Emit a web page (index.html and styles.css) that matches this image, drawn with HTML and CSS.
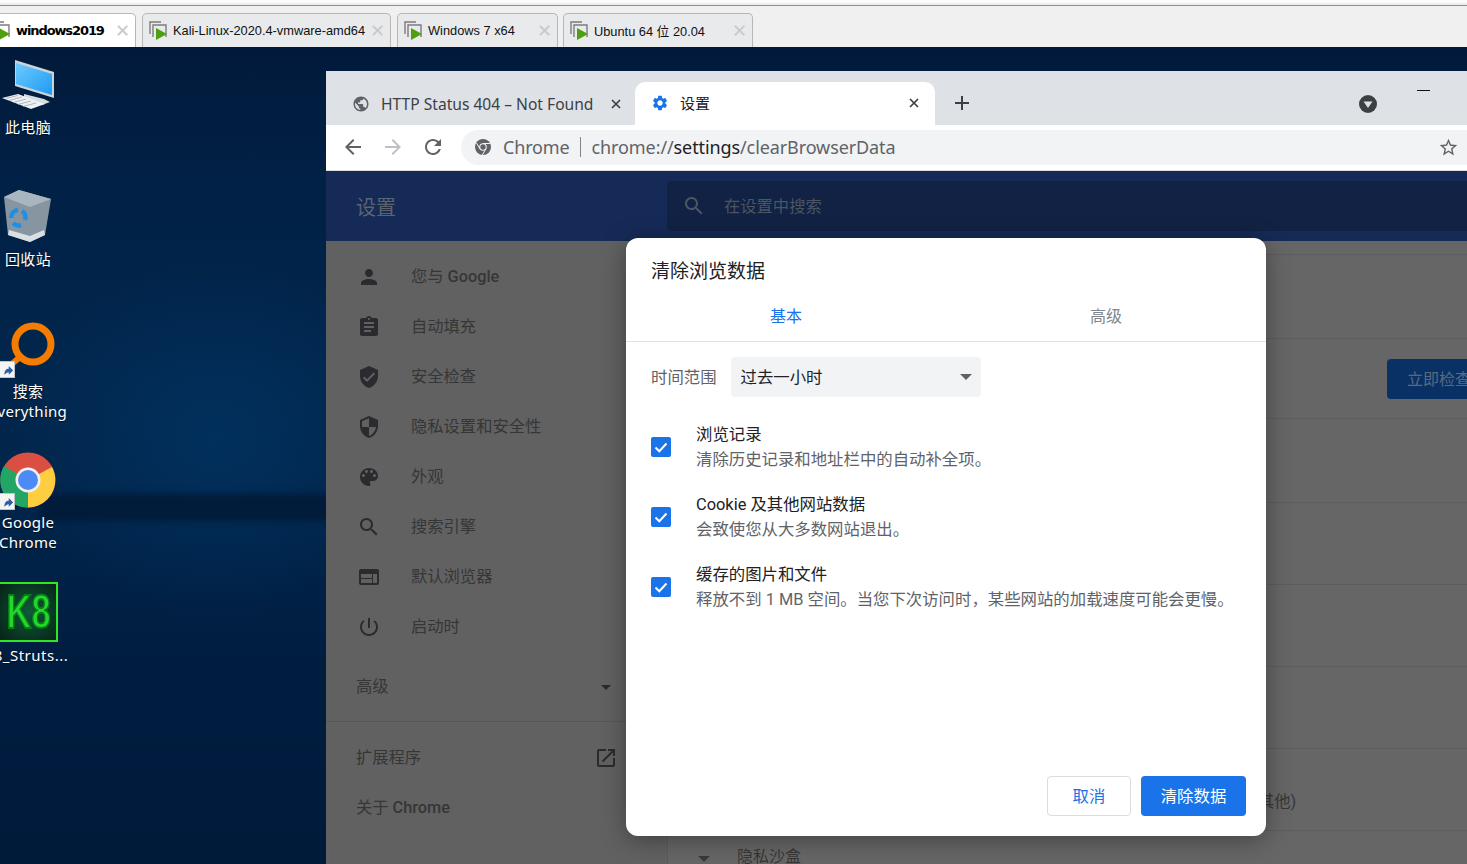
FILE: index.html
```html
<!DOCTYPE html>
<html lang="zh-CN">
<head>
<meta charset="utf-8">
<title>VMware - 清除浏览数据</title>
<link rel="stylesheet" href="styles.css">
</head>
<body>
<div class="vm-bar">
  <div class="vm-tab vm-tab-active">
    <svg class="vm-icon" viewBox="0 0 20 20"><path class="vm-frame" d="M1 13V1h11M4 16V4h13v12"/><path class="vm-play" d="M7 7l11 6-11 6z"/></svg>
    <span class="vm-label vm-label-bold">windows2019</span><span class="vm-x">✕</span>
  </div>
  <div class="vm-tab vm-tab-kali">
    <svg class="vm-icon" viewBox="0 0 20 20"><path class="vm-frame" d="M1 13V1h11M4 16V4h13v12"/><path class="vm-play" d="M7 7l11 6-11 6z"/></svg>
    <span class="vm-label">Kali-Linux-2020.4-vmware-amd64</span><span class="vm-x">✕</span>
  </div>
  <div class="vm-tab vm-tab-win7">
    <svg class="vm-icon" viewBox="0 0 20 20"><path class="vm-frame" d="M1 13V1h11M4 16V4h13v12"/><path class="vm-play" d="M7 7l11 6-11 6z"/></svg>
    <span class="vm-label">Windows 7 x64</span><span class="vm-x">✕</span>
  </div>
  <div class="vm-tab vm-tab-ubuntu">
    <svg class="vm-icon" viewBox="0 0 20 20"><path class="vm-frame" d="M1 13V1h11M4 16V4h13v12"/><path class="vm-play" d="M7 7l11 6-11 6z"/></svg>
    <span class="vm-label">Ubuntu 64 位 20.04</span><span class="vm-x">✕</span>
  </div>
</div>

<main class="desktop">
  <div class="band"></div>

  <div class="desk-icon di-pc">
    <svg class="desk-svg" viewBox="0 0 60 60">
      <defs><linearGradient id="scr" x1="0" y1="0" x2="1" y2="1"><stop offset="0" stop-color="#6ccaff"/><stop offset="1" stop-color="#1f9bf2"/></linearGradient></defs>
      <path d="M15 0l39 12v26L15 26z" fill="#c9d3da"/>
      <path d="M16 3l36 11v21L16 24z" fill="url(#scr)"/>
      <path d="M24 34l20 5 6 3-8 3-18-3z" fill="#d5dde2"/>
      <path d="M2 38l16-4 27 10-14 5z" fill="#eef2f4"/>
      <path d="M6 38.500l12-3M9 40.500l13-3.500M13 42.500l13-3.500M18 44.500l13-3.500M23 46.500l13-3.500" stroke="#9aa6ad" stroke-width=".8"/>
    </svg>
    <span class="desk-name">此电脑</span>
  </div>

  <div class="desk-icon di-bin">
    <svg class="desk-svg" viewBox="0 0 60 60">
      <path d="M4 8L19 1l32 9-6 36-15 7-22-7z" fill="#8795a1"/>
      <path d="M4 8L19 1l32 9-21 8z" fill="#a9b6bf"/>
      <path d="M8 46l22 7 15-7-1-5-14 6-21-6z" fill="#d9dfe3"/>
      <g fill="none" stroke="#1e8fe6" stroke-width="4.500"><path d="M11 29a8 8 0 0 1 7-8"/><path d="M22 22a8 8 0 0 1 3 9"/><path d="M21 36a8 8 0 0 1-8-2"/></g>
    </svg>
    <span class="desk-name">回收站</span>
  </div>

  <div class="desk-icon di-every">
    <svg class="desk-svg" viewBox="0 0 60 60">
      <circle cx="33" cy="23" r="18" fill="none" stroke="#f57c00" stroke-width="7"/>
      <path d="M20 36L6 48" stroke="#f57c00" stroke-width="6"/>
    </svg>
    <span class="badge badge-every"><svg viewBox="0 0 16 16"><path d="M5 14c0-5 2-7 5-7V4l5 5-5 5v-3c-2 0-3 1-5 3z" fill="#2b5ea8"/></svg></span>
    <span class="desk-name">搜索<br>Everything</span>
  </div>

  <div class="desk-icon di-chrome">
    <svg class="desk-svg" viewBox="0 0 60 60">
      <circle cx="28" cy="28" r="27.500" fill="#db4f43"/>
      <path d="M28 28L4 14A27.500 27.500 0 0 0 28 55.500z" fill="#22a565"/>
      <path d="M28 28l24-13A27.500 27.500 0 0 1 28 55.500z" fill="#ffcd40"/>
      <circle cx="28" cy="28" r="12.500" fill="#f1f1f1"/>
      <circle cx="28" cy="28" r="10" fill="#4c8bf5"/>
    </svg>
    <span class="badge badge-chrome"><svg viewBox="0 0 16 16"><path d="M5 14c0-5 2-7 5-7V4l5 5-5 5v-3c-2 0-3 1-5 3z" fill="#2b5ea8"/></svg></span>
    <span class="desk-name">Google<br>Chrome</span>
  </div>

  <div class="desk-icon di-k8">
    <div class="k8-box"><span class="k8-text">K8</span></div>
    <span class="desk-name">8_Struts...</span>
  </div>

  <section class="browser">
    <div class="tabstrip">
      <div class="ctab ctab-off">
        <svg class="ctab-ico" viewBox="0 0 24 24"><path fill="#5f6368" d="M12 2C6.480 2 2 6.480 2 12s4.480 10 10 10 10-4.480 10-10S17.520 2 12 2zm-1 17.930c-3.950-.490-7-3.850-7-7.930 0-.620.080-1.210.210-1.790L9 15v1c0 1.100.900 2 2 2v1.930zm6.900-2.540c-.260-.810-1-1.390-1.900-1.390h-1v-3c0-.550-.450-1-1-1H8v-2h2c.550 0 1-.450 1-1V7h2c1.100 0 2-.900 2-2v-.410c2.930 1.190 5 4.060 5 7.410 0 2.080-.800 3.970-2.100 5.390z"/></svg>
        <span class="ctab-title">HTTP Status 404 – Not Found</span>
        <svg class="ctab-close" viewBox="0 0 12 12"><path d="M2 2l8 8M10 2l-8 8"/></svg>
      </div>
      <div class="ctab ctab-on">
        <svg class="ctab-ico" viewBox="0 0 24 24"><path fill="#1a73e8" d="M19.140 12.940c.040-.300.060-.610.060-.940 0-.320-.020-.640-.070-.940l2.030-1.580c.180-.140.230-.410.120-.610l-1.920-3.320c-.120-.220-.370-.290-.590-.220l-2.390.960c-.500-.380-1.030-.700-1.620-.940l-.360-2.540c-.040-.240-.240-.410-.480-.410h-3.840c-.240 0-.430.170-.470.410l-.360 2.540c-.590.240-1.130.570-1.620.940l-2.390-.960c-.220-.080-.470 0-.590.220L2.740 8.870c-.120.210-.080.470.120.610l2.030 1.580c-.050.300-.090.630-.090.940s.020.640.070.940l-2.030 1.580c-.180.140-.230.410-.12.610l1.920 3.320c.120.220.370.290.590.220l2.390-.960c.500.380 1.030.700 1.620.940l.360 2.540c.050.240.240.410.480.410h3.840c.240 0 .440-.170.470-.410l.360-2.540c.590-.240 1.130-.560 1.620-.940l2.390.960c.220.080.470 0 .590-.220l1.920-3.320c.120-.220.070-.470-.120-.610l-2.010-1.580zM12 15.600c-1.980 0-3.600-1.620-3.600-3.600s1.620-3.600 3.600-3.600 3.600 1.620 3.600 3.600-1.620 3.600-3.600 3.600z"/></svg>
        <span class="ctab-title ctab-title-on">设置</span>
        <svg class="ctab-close" viewBox="0 0 12 12"><path d="M2 2l8 8M10 2l-8 8"/></svg>
      </div>
      <svg class="newtab" viewBox="0 0 16 16"><path d="M8 1v14M1 8h14"/></svg>
      <svg class="profile" viewBox="0 0 18 18"><circle cx="9" cy="9" r="9" fill="#3c4043"/><path d="M4.500 6.500h9L9 13z" fill="#dee1e6"/></svg>
      <span class="minimize"></span>
    </div>

    <div class="toolbar">
      <svg class="tool-ico tool-back" viewBox="0 0 24 24"><path d="M20 11H7.830l5.590-5.590L12 4l-8 8 8 8 1.410-1.410L7.830 13H20v-2z"/></svg>
      <svg class="tool-ico tool-fwd" viewBox="0 0 24 24"><path d="M12 4l-1.410 1.410L16.170 11H4v2h12.170l-5.580 5.590L12 20l8-8z"/></svg>
      <svg class="tool-ico tool-reload" viewBox="0 0 24 24"><path d="M17.650 6.350C16.200 4.900 14.210 4 12 4c-4.420 0-7.990 3.580-7.990 8s3.570 8 7.990 8c3.730 0 6.840-2.550 7.730-6h-2.080c-.820 2.330-3.040 4-5.650 4-3.310 0-6-2.690-6-6s2.690-6 6-6c1.660 0 3.140.690 4.220 1.780L13 11h7V4l-2.350 2.350z"/></svg>
      <div class="omnibox">
        <svg class="omni-chrome" viewBox="0 0 16 16"><circle cx="8" cy="8" r="8" fill="#5f6368"/><circle cx="8" cy="8" r="3.800" fill="#f1f3f4"/><circle cx="8" cy="8" r="2.700" fill="#5f6368"/><path d="M8 4.500h7M5 10l-3.500-6M10.800 10l-3.500 6" stroke="#f1f3f4" stroke-width="1"/></svg>
        <span class="omni-site">Chrome</span>
        <span class="omni-sep"></span>
        <span class="omni-url">chrome://<b class="omni-host">settings</b>/clearBrowserData</span>
        <svg class="omni-star" viewBox="0 0 24 24"><path d="M22 9.240l-7.190-.620L12 2 9.190 8.630 2 9.240l5.460 4.730L5.820 21 12 17.270 18.180 21l-1.630-7.030L22 9.240zM12 15.400l-3.760 2.270 1-4.280-3.320-2.880 4.380-.380L12 6.100l1.710 4.040 4.380.380-3.320 2.880 1 4.280L12 15.400z"/></svg>
      </div>
    </div>

    <header class="set-head">
      <span class="set-title">设置</span>
      <div class="set-search">
        <svg class="set-search-ico" viewBox="0 0 24 24"><path d="M15.500 14h-.790l-.280-.270C15.410 12.590 16 11.110 16 9.500 16 5.910 13.090 3 9.500 3S3 5.910 3 9.500 5.910 16 9.500 16c1.610 0 3.090-.590 4.230-1.570l.270.280v.790l5 4.990L20.490 19l-4.990-5zm-6 0C7.010 14 5 11.990 5 9.500S7.010 5 9.500 5 14 7.010 14 9.500 11.990 14 9.500 14z"/></svg>
        <span class="set-search-text">在设置中搜索</span>
      </div>
    </header>

    <div class="set-body">
      <nav class="side">
        <div class="side-item"><svg class="side-ico" viewBox="0 0 24 24"><path d="M12 12c2.210 0 4-1.790 4-4s-1.790-4-4-4-4 1.790-4 4 1.790 4 4 4zm0 2c-2.670 0-8 1.340-8 4v2h16v-2c0-2.660-5.330-4-8-4z"/></svg><span>您与 <b class="side-latin">Google</b></span></div>
        <div class="side-item"><svg class="side-ico" viewBox="0 0 24 24"><path d="M19 3h-4.180C14.400 1.840 13.300 1 12 1c-1.300 0-2.400.840-2.820 2H5c-1.100 0-2 .900-2 2v14c0 1.100.900 2 2 2h14c1.100 0 2-.900 2-2V5c0-1.100-.900-2-2-2zm-7 0c.550 0 1 .450 1 1s-.450 1-1 1-1-.450-1-1 .450-1 1-1zm2 14H7v-2h7v2zm3-4H7v-2h10v2zm0-4H7V7h10v2z"/></svg><span>自动填充</span></div>
        <div class="side-item"><svg class="side-ico" viewBox="0 0 24 24"><path d="M12 1L3 5v6c0 5.550 3.840 10.740 9 12 5.160-1.260 9-6.450 9-12V5l-9-4zm-2 16l-4-4 1.410-1.410L10 14.170l6.590-6.590L18 9l-8 8z"/></svg><span>安全检查</span></div>
        <div class="side-item"><svg class="side-ico" viewBox="0 0 24 24"><path d="M12 1L3 5v6c0 5.550 3.840 10.740 9 12 5.160-1.260 9-6.450 9-12V5l-9-4zm0 10.990h7c-.530 4.120-3.280 7.790-7 8.940V12H5V6.300l7-3.110v8.800z"/></svg><span>隐私设置和安全性</span></div>
        <div class="side-item"><svg class="side-ico" viewBox="0 0 24 24"><path d="M12 3c-4.970 0-9 4.030-9 9s4.030 9 9 9c.830 0 1.500-.670 1.500-1.500 0-.390-.150-.740-.390-1.010-.230-.260-.380-.610-.380-.990 0-.830.670-1.500 1.500-1.500H16c2.760 0 5-2.240 5-5 0-4.420-4.030-8-9-8zm-5.500 9c-.830 0-1.500-.670-1.500-1.500S5.670 9 6.500 9 8 9.670 8 10.500 7.330 12 6.500 12zm3-4C8.670 8 8 7.330 8 6.500S8.670 5 9.500 5s1.500.670 1.500 1.500S10.330 8 9.500 8zm5 0c-.830 0-1.500-.670-1.500-1.500S13.670 5 14.500 5s1.500.670 1.500 1.500S15.330 8 14.500 8zm3 4c-.830 0-1.500-.670-1.500-1.500S16.670 9 17.500 9s1.500.670 1.500 1.500-.670 1.500-1.500 1.500z"/></svg><span>外观</span></div>
        <div class="side-item"><svg class="side-ico" viewBox="0 0 24 24"><path d="M15.500 14h-.790l-.280-.270C15.410 12.590 16 11.110 16 9.500 16 5.910 13.090 3 9.500 3S3 5.910 3 9.500 5.910 16 9.500 16c1.610 0 3.090-.590 4.230-1.570l.270.280v.790l5 4.990L20.490 19l-4.990-5zm-6 0C7.010 14 5 11.990 5 9.500S7.010 5 9.500 5 14 7.010 14 9.500 11.990 14 9.500 14z"/></svg><span>搜索引擎</span></div>
        <div class="side-item"><svg class="side-ico" viewBox="0 0 24 24"><path d="M20 4H4c-1.100 0-1.990.900-1.990 2L2 18c0 1.100.900 2 2 2h16c1.100 0 2-.900 2-2V6c0-1.100-.900-2-2-2zm-5 14H4v-4h11v4zm0-5H4V9h11v4zm5 5h-4V9h4v9z"/></svg><span>默认浏览器</span></div>
        <div class="side-item"><svg class="side-ico" viewBox="0 0 24 24"><path d="M13 3h-2v10h2V3zm4.830 2.170l-1.420 1.420C17.990 7.860 19 9.810 19 12c0 3.870-3.130 7-7 7s-7-3.130-7-7c0-2.190 1.010-4.140 2.580-5.420L6.170 5.170C4.230 6.820 3 9.260 3 12c0 4.970 4.030 9 9 9s9-4.030 9-9c0-2.740-1.230-5.180-3.170-6.830z"/></svg><span>启动时</span></div>
        <div class="side-adv"><span>高级</span><span class="side-caret"></span></div>
        <div class="side-div"></div>
        <div class="side-link side-link-ext"><span>扩展程序</span><svg class="side-ext" viewBox="0 0 24 24"><path d="M19 19H5V5h7V3H5c-1.110 0-2 .900-2 2v14c0 1.100.890 2 2 2h14c1.100 0 2-.900 2-2v-7h-2v7zM14 3v2h3.590l-9.830 9.830 1.410 1.410L19 6.410V10h2V3h-7z"/></svg></div>
        <div class="side-link"><span>关于 <b class="side-latin">Chrome</b></span></div>
      </nav>

      <div class="content">
        <div class="row row-a"></div>
        <div class="row row-b"><span class="check-btn">立即检查</span></div>
        <div class="row row-c"></div>
        <div class="row row-d"></div>
        <div class="row row-d"></div>
        <div class="row row-d"></div>
        <div class="row row-d row-other"><span class="row-other-text">其他)</span></div>
        <div class="row-last"><span class="last-caret"></span><span class="last-text">隐私沙盒</span></div>
      </div>
    </div>

    <div class="dialog">
      <h1 class="dlg-title">清除浏览数据</h1>
      <div class="dlg-tabs">
        <span class="dlg-tab dlg-tab-on">基本</span>
        <span class="dlg-tab">高级</span>
      </div>
      <div class="dlg-body">
        <div class="range">
          <span class="range-label">时间范围</span>
          <div class="range-select"><span>过去一小时</span><span class="range-caret"></span></div>
        </div>
        <div class="opt">
          <span class="box"><svg viewBox="0 0 20 20"><path d="M4.500 10.500l3.800 3.800 7.200-7.800"/></svg></span>
          <div class="opt-text"><div class="opt-main">浏览记录</div><div class="opt-sub">清除历史记录和地址栏中的自动补全项。</div></div>
        </div>
        <div class="opt">
          <span class="box"><svg viewBox="0 0 20 20"><path d="M4.500 10.500l3.800 3.800 7.200-7.800"/></svg></span>
          <div class="opt-text"><div class="opt-main">Cookie 及其他网站数据</div><div class="opt-sub">会致使您从大多数网站退出。</div></div>
        </div>
        <div class="opt">
          <span class="box"><svg viewBox="0 0 20 20"><path d="M4.500 10.500l3.800 3.800 7.200-7.800"/></svg></span>
          <div class="opt-text"><div class="opt-main">缓存的图片和文件</div><div class="opt-sub">释放不到 1 MB 空间。当您下次访问时，某些网站的加载速度可能会更慢。</div></div>
        </div>
      </div>
      <div class="dlg-foot">
        <span class="btn btn-cancel">取消</span>
        <span class="btn btn-primary">清除数据</span>
      </div>
    </div>
  </section>
</main>
</body>
</html>
```
FILE: styles.css
```css
* { box-sizing: border-box; }
html, body { margin: 0; padding: 0; height: 100%; overflow: hidden; }
body {
  width: 1467px;
  height: 864px;
  display: flex;
  flex-direction: column;
  font-family: Roboto, "Noto Sans CJK SC", sans-serif;
  background: #021c40;
}

/* VMware tab bar */
.vm-bar {
  height: 47px;
  flex: none;
  display: flex;
  align-items: flex-end;
  gap: 6px;
  padding-left: 0;
  background: linear-gradient(#fbfbfb 0 3px, #ececec 3px 5px, #8e8e8e 5px 6px, #f0f0f0 6px);
}
.vm-tab {
  height: 34px;
  display: flex;
  align-items: center;
  background: #e9eaec;
  border: 1px solid #b7b7b7;
  border-bottom: 0;
  border-radius: 5px 5px 0 0;
  padding: 0 5px 0 6px;
  flex: none;
}
.vm-tab-active { width: 151px; margin-left: -15px; background: #fff; }
.vm-tab-kali { width: 249px; }
.vm-tab-win7 { width: 161px; }
.vm-tab-ubuntu { width: 190px; margin-left: -1px; }
.vm-icon { width: 20px; height: 20px; flex: none; margin-right: 4px; }
.vm-frame { fill: none; stroke: #7c7c7c; stroke-width: 1.4; }
.vm-play { fill: #4f9e0f; }
.vm-label {
  flex: 1;
  font: 12.800px "Liberation Sans", "Noto Sans CJK SC", sans-serif;
  color: #111;
  white-space: nowrap;
}
.vm-label-bold { font: bold 13px "DejaVu Sans", sans-serif; letter-spacing: -1.100px; color: #000; }
.vm-x { font: 18px "DejaVu Sans", sans-serif; color: #c9c9c9; flex: none; }

/* Desktop */
.desktop {
  position: relative;
  flex: 1;
  overflow: hidden;
  background:
    radial-gradient(ellipse 210px 180px at 215px 390px, #01305d 0%, rgba(1,48,93,0) 100%),
    linear-gradient(#011a3b 0, #012146 140px, #01264c 330px, #01254b 440px, #001d40 620px, #001a3a 100%);
}
.band {
  position: absolute;
  left: 40px;
  top: 447px;
  width: 290px;
  height: 27px;
  background: #011b3a;
  filter: blur(3px);
}
.desk-icon {
  position: absolute;
  left: -22px;
  width: 100px;
  text-align: center;
}
.di-pc { top: 13px; }
.di-bin { top: 142px; }
.di-every { top: 274px; }
.di-chrome { top: 405px; }
.di-k8 { top: 535px; }
.desk-svg { display: block; width: 60px; height: 60px; margin-left: 22px; }
.desk-name {
  display: block;
  font: 15px/20px "Noto Sans", "Noto Sans CJK SC", sans-serif;
  letter-spacing: .3px;
  color: #fff;
  text-shadow: 0 1px 1px rgba(0,0,0,.6);
}
.di-pc .desk-name { margin-top: -3px; }
.badge {
  position: absolute;
  left: 21px;
  width: 16px;
  height: 17px;
  background: #f4f4f4;
  border: 1px solid #c4c4c4;
  display: block;
}
.badge svg { display: block; width: 100%; height: 100%; }
.badge-every { top: 40px; }
.badge-chrome { top: 41px; }
.k8-box {
  width: 80px;
  height: 60px;
  border: 2px solid #2ee626;
  background: radial-gradient(circle at 65% 50%, #0f5b3b, #05160f 85%);
  display: flex;
  align-items: center;
  justify-content: center;
  padding-left: 22px;
}
.k8-text {
  font: bold 48px/1 "Liberation Sans", sans-serif;
  transform: scaleX(.72);
  color: #20d92a;
  -webkit-text-stroke: 2px #0a7d1a;
  text-shadow: 0 0 2px #000;
}
.di-k8 .desk-name { margin-top: 3px; padding-left: 6px; letter-spacing: .5px; }

/* Browser window */
.browser {
  position: absolute;
  left: 326px;
  top: 24px;
  right: 0;
  bottom: 0;
  display: flex;
  flex-direction: column;
  background: #616161;
}
.tabstrip {
  position: relative;
  height: 54px;
  flex: none;
  background: #dee1e6;
  display: flex;
  align-items: flex-end;
  padding-left: 15px;
}
.ctab {
  height: 43px;
  display: flex;
  align-items: center;
  flex: none;
}
.ctab-off { width: 294px; padding: 0 13px 0 10px; }
.ctab-on { width: 300px; padding: 0 15px 1px 16px; background: #fff; border-radius: 10px 10px 0 0; }
.ctab-ico { width: 18px; height: 18px; flex: none; margin-right: 11px; }
.ctab-off .ctab-ico { margin-right: 11px; margin-left: 1px; }
.ctab-title {
  flex: 1;
  font: 15.600px "Noto Sans", sans-serif;
  color: #3c4043;
  white-space: nowrap;
}
.ctab-title-on { font: 15px "Noto Sans CJK SC", sans-serif; color: #202124; padding-bottom: 1px; }
.ctab-close { width: 12px; height: 12px; flex: none; fill: none; stroke: #3c4043; stroke-width: 1.700; }
.newtab { position: absolute; left: 628px; top: 24px; width: 16px; height: 16px; fill: none; stroke: #3c4043; stroke-width: 2; }
.profile { position: absolute; left: 1033px; top: 24px; width: 18px; height: 18px; }
.minimize { position: absolute; left: 1091px; top: 19px; width: 13px; height: 1px; background: #111; }

.toolbar {
  height: 46px;
  flex: none;
  background: #fff;
  border-bottom: 1px solid #dcdcdc;
  display: flex;
  align-items: center;
  padding: 0 0 1px 15px;
  gap: 16px;
}
.tool-ico { width: 24px; height: 24px; flex: none; fill: #5f6368; }
.tool-fwd { fill: #bdc1c6; }
.omnibox {
  flex: 1;
  height: 35px;
  margin-right: -18px;
  padding: 0 26px 0 14px;
  background: #f1f3f4;
  border-radius: 18px;
  display: flex;
  align-items: center;
  font: 18px "Noto Sans", sans-serif;
  color: #5f6368;
  white-space: nowrap;
}
.omni-chrome { width: 16px; height: 16px; flex: none; margin-right: 12px; }
.omni-site { letter-spacing: -.15px; }
.omni-sep { width: 1px; height: 20px; background: #80868b; margin: 0 11px 0 10px; }
.omni-url { flex: 1; letter-spacing: -.1px; }
.omni-host { font-weight: 400; color: #202124; }
.omni-star { width: 21px; height: 21px; flex: none; fill: #5f6368; }

.set-head {
  height: 70px;
  flex: none;
  background: #152a56;
  display: flex;
  align-items: flex-start;
}
.set-title {
  width: 341px;
  flex: none;
  padding: 23px 0 0 30px;
  font: 20px/26px "Noto Sans CJK SC", sans-serif;
  color: #5b6570;
}
.set-search {
  flex: 1;
  height: 50px;
  margin-top: 10px;
  background: #112244;
  border-radius: 4px 0 0 4px;
  display: flex;
  align-items: center;
  padding-left: 15px;
  color: #4b5563;
}
.set-search-ico { width: 24px; height: 24px; flex: none; fill: #4b5563; margin-right: 18px; }
.set-search-text { font: 16.300px "Noto Sans CJK SC", sans-serif; padding-bottom: 3px; }

.set-body {
  flex: 1;
  display: flex;
  min-height: 0;
}
.side {
  width: 341px;
  flex: none;
  background: #616161;
  padding-top: 11px;
  font: 16.300px/24px Roboto, "Noto Sans CJK SC", sans-serif;
  color: #363636;
}
.side-latin { font-weight: 500; }
.side-item {
  height: 50px;
  display: flex;
  align-items: center;
  padding-left: 31px;
  gap: 30px;
}
.side-ico { width: 24px; height: 24px; flex: none; fill: #2a2b2e; }
.side-adv {
  height: 60px;
  margin-top: 5px;
  display: flex;
  align-items: center;
  justify-content: space-between;
  padding: 0 56px 0 30px;
}
.side-caret { width: 0; height: 0; border: 5px solid transparent; border-top-color: #2a2b2e; border-bottom: 0; }
.side-div { height: 1px; background: #575757; margin-top: 4px; }
.side-link {
  height: 50px;
  display: flex;
  align-items: center;
  justify-content: space-between;
  padding: 0 49px 0 30px;
}
.side-link-ext { margin-top: 11px; }
.side-ext { width: 24px; height: 24px; fill: #2a2b2e; }

.content {
  flex: 1;
  min-width: 0;
  background: #666;
  padding-top: 13px;
  border-left: 1px solid #5b5b5b;
  color: #363636;
}
.row { border-bottom: 1px solid #5d5d5d; }
.row-a { height: 85px; border-top: 1px solid #5d5d5d; }
.row-b { height: 80px; display: flex; align-items: center; padding-left: 719px; }
.row-c { height: 84px; }
.row-d { height: 82px; }
.row-other { display: flex; align-items: center; padding: 21px 0 0 590px; }
.check-btn {
  flex: none;
  width: 100px;
  height: 40px;
  padding-left: 20px;
  background: #0a3166;
  border-radius: 4px;
  color: #596a80;
  font: 16px/38px "Noto Sans CJK SC", sans-serif;
  white-space: nowrap;
}
.row-other-text { font: 16.300px Roboto, "Noto Sans CJK SC", sans-serif; }
.row-last { display: flex; align-items: center; padding: 12px 0 0 30px; gap: 27px; font: 16px/24px "Noto Sans CJK SC", sans-serif; }
.last-caret { width: 0; height: 0; border: 6px solid transparent; border-top-color: #3a3a3a; border-bottom: 0; margin-top: 8px; }

/* Dialog */
.dialog {
  position: absolute;
  left: 300px;
  top: 167px;
  width: 640px;
  height: 598px;
  background: #fff;
  border-radius: 12px;
  box-shadow: 0 4px 24px rgba(0, 0, 0, .35);
  display: flex;
  flex-direction: column;
}
.dlg-title {
  margin: 0;
  padding: 18px 25px 0;
  font: 400 19px/27px "Noto Sans CJK SC", sans-serif;
  color: #202124;
}
.dlg-tabs {
  display: grid;
  grid-template-columns: 320px 320px;
  height: 59px;
  padding-top: 10px;
  border-bottom: 1px solid #dfe1e5;
  flex: none;
}
.dlg-tab {
  text-align: center;
  font: 16px/24px "Noto Sans CJK SC", sans-serif;
  color: #80868b;
  padding-top: 10px;
}
.dlg-tab-on { color: #1a73e8; }
.dlg-body { flex: 1; padding: 15px 25px 0; }
.range { display: flex; align-items: center; gap: 14px; font: 16.400px "Noto Sans CJK SC", sans-serif; }
.range-label { color: #5f6368; flex: none; padding-bottom: 2px; }
.range-select {
  width: 250px;
  height: 40px;
  background: #f1f3f4;
  border-radius: 4px;
  display: flex;
  align-items: center;
  justify-content: space-between;
  padding: 0 9px 2px 10px;
  color: #202124;
}
.range-caret { width: 0; height: 0; border: 6.500px solid transparent; border-top-color: #5f6368; border-bottom: 0; margin-top: 2px; }
.opt { display: flex; align-items: center; height: 70px; }
.range + .opt { margin-top: 15px; }
.box {
  width: 20px;
  height: 20px;
  flex: none;
  background: #1a73e8;
  border-radius: 2px;
  margin-right: 25px;
}
.box svg { display: block; width: 20px; height: 20px; fill: none; stroke: #fff; stroke-width: 2; }
.opt-text { font: 16.400px/24px Roboto, "Noto Sans CJK SC", sans-serif; padding-top: 1px; }
.opt-main { color: #202124; }
.opt-sub { color: #5f6368; padding-top: 1px; }
.dlg-foot {
  display: flex;
  justify-content: flex-end;
  gap: 10px;
  padding: 0 20px 20px;
  flex: none;
}
.btn {
  height: 40px;
  border-radius: 4px;
  text-align: center;
  font: 16.400px/36px "Noto Sans CJK SC", sans-serif;
  border: 1px solid transparent;
}
.btn-cancel { width: 84px; border-color: #dadce0; color: #1a73e8; background: #fff; }
.btn-primary { width: 105px; background: #1a73e8; color: #fff; }
```
